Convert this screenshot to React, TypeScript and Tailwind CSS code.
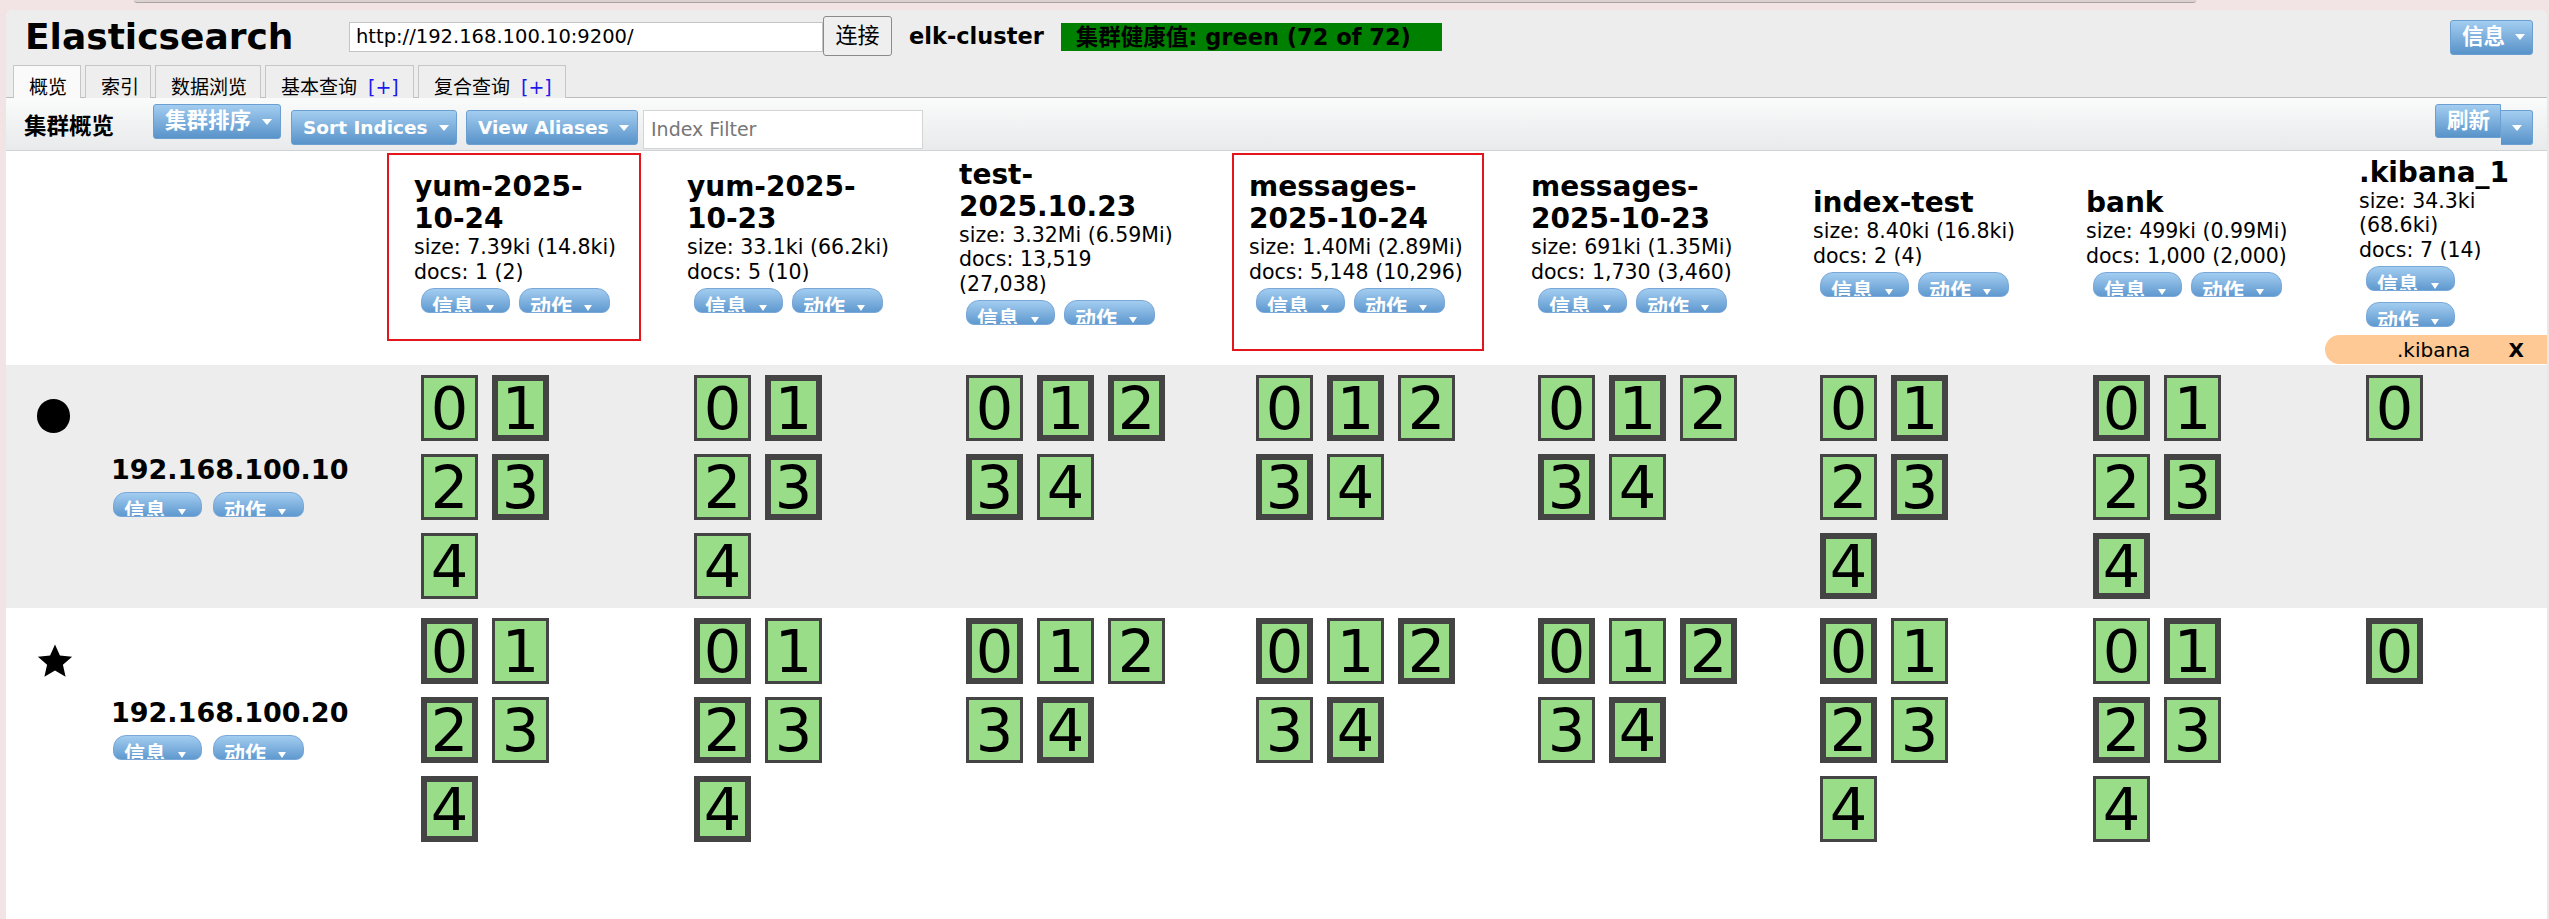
import React from 'react';

type IndexInfo = {
  title: string[];
  lines: string[];
  primaries: number[];
  perLine: number;
  shards: number;
  mark?: string;
  narrow?: boolean;
};

const FONT = "font-['DejaVu_Sans','Noto_Sans_CJK_SC',sans-serif]";

const indices: IndexInfo[] = [
  {
    title: ['yum-2025-', '10-24'],
    lines: ['size: 7.39ki (14.8ki)', 'docs: 1 (2)'],
    primaries: [1, 3],
    perLine: 2,
    shards: 5,
    mark: 'absolute -left-[20px] top-[2px] w-[254px] h-[188px] border-2 border-[#e3161e] pointer-events-none',
  },
  { title: ['yum-2025-', '10-23'], lines: ['size: 33.1ki (66.2ki)', 'docs: 5 (10)'], primaries: [1, 3], perLine: 2, shards: 5 },
  {
    title: ['test-', '2025.10.23'],
    lines: ['size: 3.32Mi (6.59Mi)', 'docs: 13,519', '(27,038)'],
    primaries: [1, 2, 3],
    perLine: 3,
    shards: 5,
  },
  {
    title: ['messages-', '2025-10-24'],
    lines: ['size: 1.40Mi (2.89Mi)', 'docs: 5,148 (10,296)'],
    primaries: [1, 3],
    perLine: 3,
    shards: 5,
    mark: 'absolute -left-[10px] top-[2px] w-[252px] h-[198px] border-2 border-[#e3161e] pointer-events-none',
  },
  {
    title: ['messages-', '2025-10-23'],
    lines: ['size: 691ki (1.35Mi)', 'docs: 1,730 (3,460)'],
    primaries: [1, 3],
    perLine: 3,
    shards: 5,
  },
  { title: ['index-test'], lines: ['size: 8.40ki (16.8ki)', 'docs: 2 (4)'], primaries: [1, 3, 4], perLine: 2, shards: 5 },
  { title: ['bank'], lines: ['size: 499ki (0.99Mi)', 'docs: 1,000 (2,000)'], primaries: [0, 3, 4], perLine: 2, shards: 5 },
  {
    title: ['.kibana_1'],
    lines: ['size: 34.3ki', '(68.6ki)', 'docs: 7 (14)'],
    primaries: [],
    perLine: 2,
    shards: 1,
    narrow: true,
  },
];

const nodes = [
  { name: '192.168.100.10', master: false },
  { name: '192.168.100.20', master: true },
];

const GRID = 'grid grid-cols-[401px_273px_272px_290px_282px_282px_273px_273px_195px]';

const Caret = ({ size = 'md' }: { size?: 'sm' | 'md' }) => (
  <span
    className={
      size === 'sm'
        ? 'inline-block w-0 h-0 border-l-[4px] border-r-[4px] border-t-[6px] border-l-transparent border-r-transparent border-t-white'
        : 'inline-block w-0 h-0 border-l-[5px] border-r-[5px] border-t-[6px] border-l-transparent border-r-transparent border-t-white'
    }
  />
);

// the little rounded action buttons; their label sits low and is cut off at the bottom like in es-head
const Pill = ({ label, width }: { label: string; width: string }) => (
  <div
    className={`${width} h-[25px] overflow-hidden shrink-0 flex items-start gap-[12px] pl-[10px] pt-[6px] rounded-t-[13px] rounded-b-[8px] border border-[#78a7d8] bg-linear-to-b from-[#a3cdf0] to-[#5f99cf] text-white font-bold text-[21px] leading-[24px]`}
  >
    <span>{label}</span>
    <span className="pt-[10px] flex">
      <Caret size="sm" />
    </span>
  </div>
);

const Shard = ({ n, primary }: { n: number; primary: boolean }) => (
  <div
    className={`w-[57px] h-[66px] flex items-center justify-center bg-[#99dd88] border-[#444444] text-[59px] leading-none text-black ${
      primary ? 'border-[6px]' : 'border-[3px]'
    }`}
  >
    {n}
  </div>
);

const ShardGroup = ({ index, row }: { index: IndexInfo; row: number }) => {
  const ids = Array.from({ length: index.shards }, (_, i) => i);
  const lines: number[][] = [];
  for (let i = 0; i < ids.length; i += index.perLine) lines.push(ids.slice(i, i + index.perLine));
  return (
    <div className="flex flex-col gap-[13px] pt-[10px] pl-[14px]">
      {lines.map((line, li) => (
        <div key={li} className="flex gap-[14px]">
          {line.map((n) => {
            const p = index.primaries.includes(n);
            return <Shard key={n} n={n} primary={row === 0 ? p : !p} />;
          })}
        </div>
      ))}
    </div>
  );
};

const IndexHeader = ({ index }: { index: IndexInfo }) => (
  <div className="relative flex flex-col justify-center pl-[7px]">
    {index.mark && <div className={index.mark} />}
    {index.title.map((t) => (
      <div key={t} className="text-[28px] font-bold leading-[32px] whitespace-nowrap">
        {t}
      </div>
    ))}
    {index.lines.map((l) => (
      <div key={l} className="text-[20.5px] leading-[24.5px] whitespace-nowrap">
        {l}
      </div>
    ))}
    <div className={`mt-[4px] ml-[7px] flex flex-wrap gap-x-[9px] gap-y-[11px] ${index.narrow ? 'w-[100px]' : ''}`}>
      <Pill label="信息" width="w-[89px]" />
      <Pill label="动作" width={index.narrow ? 'w-[89px]' : 'w-[91px]'} />
    </div>
  </div>
);

const ToolButton = ({ label, className }: { label: string; className: string }) => (
  <div
    className={`${className} h-[35px] flex items-center gap-[11px] pl-[11px] rounded-[3px] border border-[#6b9fd2] bg-linear-to-b from-[#a3cdf0] to-[#5893c9] text-white font-bold text-[18.5px] whitespace-nowrap`}
  >
    <span>{label}</span>
    <Caret />
  </div>
);

const NodeIcon = ({ master }: { master: boolean }) =>
  master ? (
    <svg width="38" height="38" viewBox="0 0 24 24" className="-ml-[1px]">
      <polygon points="12,1.5 15.1,8.6 22.8,9.3 17,14.4 18.7,22 12,18 5.3,22 7,14.4 1.2,9.3 8.9,8.6" fill="#000" />
    </svg>
  ) : (
    <div className="w-[33px] h-[34px] rounded-full bg-black" />
  );

const App: React.FC = () => {
  return (
    <div className={`min-h-[919px] bg-[#f2e4e4] pl-[6px] pr-[2px] text-black ${FONT}`}>
      <div className="h-[10px]">
        <div className="ml-[128px] w-[2062px] h-[3px] bg-[#dcd2d2] border-b border-[#aaa2a2] rounded-b-[5px]" />
      </div>
      <div className="relative min-h-[909px] bg-white rounded-t-[7px] overflow-hidden">
        {/* header */}
        <div className="bg-[#ededed] border-b border-[#bdbdbd]">
          <div className="h-[54px] flex items-center">
            <div className="w-[343px] pl-[19px] text-[36px] font-bold leading-none">Elasticsearch</div>
            <div className="w-[474px] h-[30px] bg-white border border-[#c4c4c4] pl-[6px] flex items-center text-[19.5px]">
              http://192.168.100.10:9200/
            </div>
            <div className="w-[69px] h-[40px] -mt-[3px] flex items-center justify-center rounded-[3px] border border-[#8a8a8a] bg-[#efefef] text-[22px]">
              连接
            </div>
            <div className="ml-[17px] text-[22.5px] font-bold">elk-cluster</div>
            <div className="ml-[17px] w-[381px] h-[28px] flex items-center pl-[15px] bg-[#008000] text-[22.5px] font-bold leading-none whitespace-nowrap">
              集群健康值: green (72 of 72)
            </div>
            <div className="ml-auto mr-[14px] w-[83px] h-[35px] flex items-center gap-[10px] pl-[11px] rounded-[3px] border border-[#6b9fd2] bg-linear-to-b from-[#a3cdf0] to-[#5893c9] text-white font-bold text-[21.5px]">
              <span>信息</span>
              <Caret />
            </div>
          </div>
          <div className="h-[33px] flex items-end gap-[4px] pl-[7px] text-[19px]">
            {[
              { label: '概览', w: 'w-[68px]', active: true },
              { label: '索引', w: 'w-[66px]' },
              { label: '数据浏览', w: 'w-[106px]' },
              { label: '基本查询', w: 'w-[149px]', plus: true },
              { label: '复合查询', w: 'w-[148px]', plus: true },
            ].map((t) => (
              <div
                key={t.label}
                className={`${t.w} h-[33px] -mb-px pl-[15px] pt-[9px] leading-[24px] whitespace-nowrap overflow-hidden border border-b-0 border-[#c6c6c6] ${
                  t.active ? 'bg-[#fafafa]' : 'bg-[#eeeeee]'
                }`}
              >
                {t.label}
                {t.plus && <span className="ml-[11px] text-[#1a1aee]">[+]</span>}
              </div>
            ))}
          </div>
        </div>

        {/* toolbar */}
        <div className="h-[53px] flex items-start bg-linear-to-b from-[#fafbfb] to-[#e8eaeb] border-b border-[#cfd3d6]">
          <div className="w-[147px] pl-[18px] pt-[16px] text-[22.5px] font-bold leading-[24px]">集群概览</div>
          <ToolButton label="集群排序" className="w-[128px] mt-[6px] text-[21.5px]" />
          <ToolButton label="Sort Indices" className="w-[166px] mt-[12px] ml-[10px]" />
          <ToolButton label="View Aliases" className="w-[172px] mt-[12px] ml-[9px]" />
          <div className="mt-[12px] ml-[5px] w-[280px] h-[39px] bg-white border border-[#d4d4d4] pl-[7px] flex items-center text-[19px] text-[#767676]">
            Index Filter
          </div>
          <div className="ml-auto mr-[14px] flex items-start">
            <div className="w-[66px] h-[34px] mt-[6px] flex items-center pl-[11px] rounded-l-[3px] border border-[#6b9fd2] bg-linear-to-b from-[#a3cdf0] to-[#5893c9] text-white font-bold text-[21.5px]">
              刷新
            </div>
            <div className="w-[32px] h-[35px] mt-[12px] flex items-center justify-center rounded-r-[3px] border border-l-0 border-[#6b9fd2] bg-linear-to-b from-[#a3cdf0] to-[#5893c9]">
              <Caret />
            </div>
          </div>
        </div>

        {/* overview */}
        <div>
          <div className={`${GRID} h-[182px]`}>
            <div />
            {indices.map((idx) => (
              <IndexHeader key={idx.title.join('')} index={idx} />
            ))}
          </div>
          <div className={`${GRID} h-[32px]`}>
            {Array.from({ length: 8 }, (_, i) => (
              <div key={i} />
            ))}
            <div className="-ml-[27px] w-[260px] h-[29px] mt-[2px] flex items-center pl-[72px] rounded-l-full bg-[#fec994] text-[20px]">
              <span>.kibana</span>
              <span className="ml-[38px] font-bold">X</span>
            </div>
          </div>
          {nodes.map((node, ni) => (
            <div key={node.name} className={`${GRID} h-[243px] ${ni === 0 ? 'bg-[#ededed]' : 'bg-white'}`}>
              <div className="flex">
                <div className="w-[105px] shrink-0 pl-[31px] pt-[34px]">
                  <NodeIcon master={node.master} />
                </div>
                <div className="flex flex-col justify-center pb-[2px]">
                  <div className="text-[27px] font-bold leading-[32px]">{node.name}</div>
                  <div className="mt-[6px] ml-[2px] flex gap-[11px]">
                    <Pill label="信息" width="w-[89px]" />
                    <Pill label="动作" width="w-[91px]" />
                  </div>
                </div>
              </div>
              {indices.map((idx) => (
                <ShardGroup key={idx.title.join('')} index={idx} row={ni} />
              ))}
            </div>
          ))}
        </div>
      </div>
    </div>
  );
};

export default App;
